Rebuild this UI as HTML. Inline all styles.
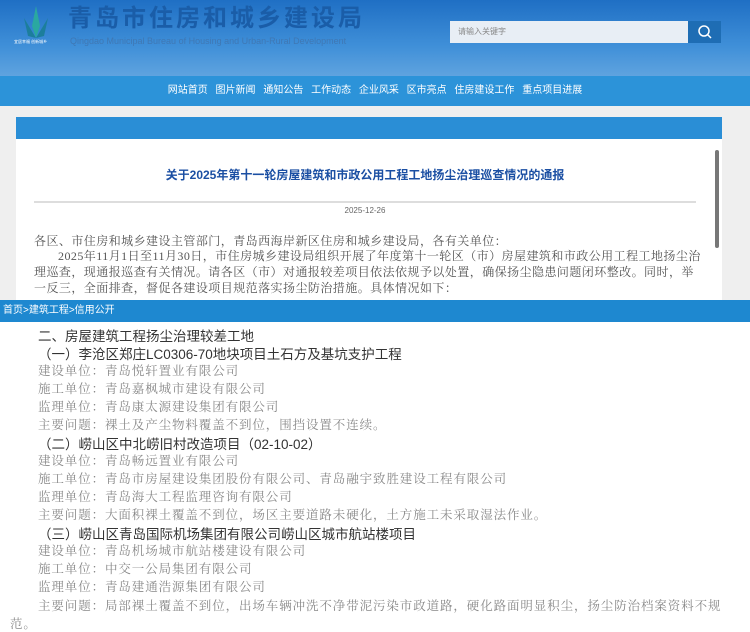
<!DOCTYPE html>
<html><head><meta charset="utf-8"><style>
*{margin:0;padding:0;box-sizing:border-box}
body{width:750px;height:631px;overflow:hidden;background:#fff;position:relative;font-family:"Liberation Sans","Noto Sans CJK SC",sans-serif}
.hdr{position:absolute;left:0;top:0;width:750px;height:76px;background:linear-gradient(180deg,#1f6fc4 0%,#3f8fd8 60%,#5fa3df 100%)}
.nav{position:absolute;left:0;top:76px;width:750px;height:30px;background:#2c93d9;color:#fff;font-size:10px;text-align:center;line-height:30px;word-spacing:5px}
.gray{position:absolute;left:0;top:106px;width:750px;height:194px;background:#efefef}
.card{position:absolute;left:16px;top:118px;width:706px;height:182px;background:#fff}
.bar{position:absolute;left:16px;top:117px;width:706px;height:22px;background:#2a8ed6}
.ttl{position:absolute;left:0;top:166px;width:730px;text-align:center;font-size:12px;font-weight:bold;color:#1b4fa3}
.rule{position:absolute;left:34px;top:201px;width:662px;height:2px;background:#ddd}
.date{position:absolute;left:0;top:206px;width:730px;text-align:center;font-size:8px;color:#666}
.serif{font-family:"Liberation Serif","Noto Serif CJK SC",serif}
.p{position:absolute;font-size:12px;color:#555;white-space:nowrap;letter-spacing:0.45px}
.sb{position:absolute;left:715px;top:150px;width:4px;height:98px;background:#777;border-radius:2px}
.bc{position:absolute;left:0;top:300px;width:750px;height:22px;background:#1e88d0;color:#fff;font-size:10px;line-height:22px;padding-left:3px}
.l{position:absolute;left:38px;font-size:12.5px;letter-spacing:0.9px;color:#888;white-space:nowrap;font-family:"Liberation Serif","Noto Serif CJK SC",serif}
.h{position:absolute;left:38px;font-size:13.5px;color:#333;white-space:nowrap}
</style></head><body>
<div class="hdr"></div>
<svg style="position:absolute;left:22px;top:6px" width="28" height="34"><polygon points="14,0 18,20 14,32 10,20" fill="#2aa8a0"/><polygon points="2,12 14,32 6,30" fill="#1c7e9c"/><polygon points="26,12 14,32 22,30" fill="#1c7e9c"/></svg>
<div style="position:absolute;left:14px;top:39px;font-size:4px;color:#fff">宜居幸福 创新城乡</div>
<div style="position:absolute;left:68px;top:5px;font-size:24px;line-height:28px;font-weight:bold;color:#1a5da8;letter-spacing:3px">青岛市住房和城乡建设局</div>
<div style="position:absolute;left:70px;top:36px;font-size:9px;color:#3f78b4">Qingdao Municipal Bureau of Housing and Urban-Rural Development</div>
<div style="position:absolute;left:450px;top:21px;width:238px;height:22px;background:#e8eef5;font-size:8px;color:#888;line-height:22px;padding-left:8px">请输入关键字</div>
<div style="position:absolute;left:688px;top:21px;width:33px;height:22px;background:#1e6db4"></div>
<svg style="position:absolute;left:697px;top:24px" width="16" height="16"><circle cx="7" cy="7" r="5" stroke="#fff" stroke-width="1.5" fill="none"/><line x1="10.5" y1="10.5" x2="14" y2="14" stroke="#fff" stroke-width="1.5"/></svg>
<div class="nav">网站首页 图片新闻 通知公告 工作动态 企业风采 区市亮点 住房建设工作 重点项目进展</div>
<div class="gray"></div>
<div class="card"></div>
<div class="bar"></div>
<div class="ttl">关于2025年第十一轮房屋建筑和市政公用工程工地扬尘治理巡查情况的通报</div>
<div class="rule"></div>
<div class="date">2025-12-26</div>
<div class="sb"></div>
<div class="p serif" style="left:34px;top:232px">各区、市住房和城乡建设主管部门，青岛西海岸新区住房和城乡建设局，各有关单位：</div>
<div class="p serif" style="left:58px;top:247px">2025年11月1日至11月30日，市住房城乡建设局组织开展了年度第十一轮区（市）房屋建筑和市政公用工程工地扬尘治</div>
<div class="p serif" style="left:34px;top:263px">理巡查，现通报巡查有关情况。请各区（市）对通报较差项目依法依规予以处置，确保扬尘隐患问题闭环整改。同时，举</div>
<div class="p serif" style="left:34px;top:279px">一反三，全面排查，督促各建设项目规范落实扬尘防治措施。具体情况如下：</div>
<div class="bc">首页&gt;建筑工程&gt;信用公开</div>
<div class="h" style="top:325px">二、房屋建筑工程扬尘治理较差工地</div>
<div class="h" style="top:343px">（一）李沧区郑庄LC0306-70地块项目土石方及基坑支护工程</div>
<div class="l" style="top:361px">建设单位：青岛悦轩置业有限公司</div>
<div class="l" style="top:379px">施工单位：青岛嘉枫城市建设有限公司</div>
<div class="l" style="top:397px">监理单位：青岛康太源建设集团有限公司</div>
<div class="l" style="top:415px">主要问题：裸土及产尘物料覆盖不到位，围挡设置不连续。</div>
<div class="h" style="top:433px">（二）崂山区中北崂旧村改造项目（02-10-02）</div>
<div class="l" style="top:451px">建设单位：青岛畅远置业有限公司</div>
<div class="l" style="top:469px">施工单位：青岛市房屋建设集团股份有限公司、青岛融宇致胜建设工程有限公司</div>
<div class="l" style="top:487px">监理单位：青岛海大工程监理咨询有限公司</div>
<div class="l" style="top:505px">主要问题：大面积裸土覆盖不到位，场区主要道路未硬化，土方施工未采取湿法作业。</div>
<div class="h" style="top:523px">（三）崂山区青岛国际机场集团有限公司崂山区城市航站楼项目</div>
<div class="l" style="top:541px">建设单位：青岛机场城市航站楼建设有限公司</div>
<div class="l" style="top:559px">施工单位：中交一公局集团有限公司</div>
<div class="l" style="top:577px">监理单位：青岛建通浩源集团有限公司</div>
<div class="l" style="top:596px">主要问题：局部裸土覆盖不到位，出场车辆冲洗不净带泥污染市政道路，硬化路面明显积尘，扬尘防治档案资料不规</div>
<div class="l" style="top:614px;left:10px">范。</div>
</body></html>
